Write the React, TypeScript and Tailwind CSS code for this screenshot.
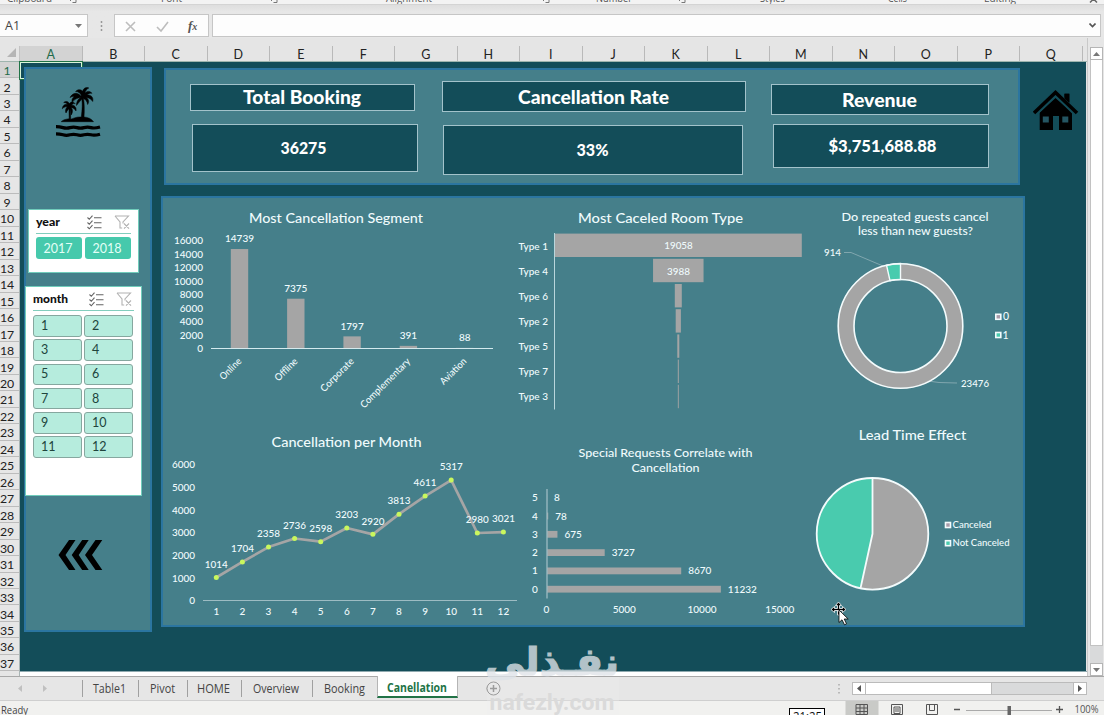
import React from 'react';

type TProps = {
  x: number;
  y: number;
  w?: number;
  size?: number;
  anchor?: 'start' | 'middle' | 'end';
  weight?: number;
  fill?: string;
  rotate?: number;
  children: React.ReactNode;
};

function T({ x, y, w, size = 10, anchor = 'middle', weight = 500, fill = '#f0fbfd', rotate, children }: TProps) {
  return (
    <text
      x={x}
      y={y}
      fontSize={size}
      fontWeight={weight}
      textAnchor={anchor}
      fill={fill}
      textLength={w}
      lengthAdjust="spacingAndGlyphs"
      transform={rotate ? `rotate(${rotate} ${x} ${y})` : undefined}
    >
      {children}
    </text>
  );
}

const GRAY = '#a5a5a5';
const MINT = '#49cbae';
const AXIS = '#b9d6dc';

function SegmentChart() {
  const data: [string, number, number][] = [
    ['Online', 14739, 26],
    ['Offline', 7375, 28],
    ['Corporate', 1797, 43],
    ['Complementary', 391, 66],
    ['Aviation', 88, 33],
  ];
  return (
    <svg width="345" height="222" viewBox="163 198 345 222" className="shrink-0 overflow-visible">
      <T x={336} y={223.3} w={174} size={13.5}>Most Cancellation Segment</T>
      {[0, 2000, 4000, 6000, 8000, 10000, 12000, 14000, 16000].map((v) => (
        <T key={v} x={203} y={352.2 - v * 0.00675} anchor="end">{v}</T>
      ))}
      {data.map(([name, v, w], i) => {
        const cx = 239.5 + i * 56.3;
        const top = 348.5 - v * 0.00675;
        return (
          <g key={name}>
            <rect x={cx - 8.7} y={top} width={17.4} height={348.5 - top} fill={GRAY} />
            <T x={cx} y={top - 6.7}>{v}</T>
            <T x={cx + 2.5} y={362} w={w} anchor="end" rotate={-45} size={9.8}>{name}</T>
          </g>
        );
      })}
      <path d="M211 348.5H493" stroke="#d4eaee" />
    </svg>
  );
}

function RoomChart() {
  const data: [string, number][] = [
    ['Type 1', 247], ['Type 4', 50.5], ['Type 6', 7], ['Type 2', 5.2], ['Type 5', 2], ['Type 7', 1], ['Type 3', 0.9],
  ];
  return (
    <svg width="302" height="222" viewBox="508 198 302 222" className="shrink-0 overflow-visible">
      <T x={660.5} y={223.3} w={165} size={13.5}>Most Caceled Room Type</T>
      {data.map(([name, w], i) => (
        <g key={name}>
          <rect x={678.3 - w / 2} y={233.6 + i * 25.2} width={w} height={23.4} fill={GRAY} />
          <T x={548} y={249.5 + i * 25.1} w={29.5} anchor="end">{name}</T>
        </g>
      ))}
      <T x={678.5} y={249.3} w={28.5}>19058</T>
      <T x={678.5} y={274.6} w={23}>3988</T>
      <path d="M554.5 233V409.500" stroke={AXIS} />
    </svg>
  );
}

function GuestsChart() {
  return (
    <svg width="213" height="222" viewBox="810 198 213 222" className="shrink-0 overflow-visible">
      <T x={915} y={220.500} w={147} size={12}>Do repeated guests cancel</T>
      <T x={915.5} y={235.3} w={115} size={12}>less than new guests?</T>
      <path d="M844 252.500L851 252.500L883 266M928 381L939 382.500L957 383" stroke="#8fb0b7" strokeWidth="0.8" fill="none" />
      <circle cx="900.5" cy="326" r="54.500" fill="none" stroke={GRAY} strokeWidth="16" />
      <path d="M886.5 265.100A62.500 62.500 0 0 1 900.500 263.500V279.500A46.500 46.500 0 0 0 890 280.700Z" fill={MINT} stroke="#f3fbfc" strokeWidth="1.4" />
      <circle cx="900.5" cy="326" r="62.300" fill="none" stroke="#f3fbfc" strokeWidth="1.6" />
      <circle cx="900.5" cy="326" r="46.500" fill="none" stroke="#f3fbfc" strokeWidth="1.6" />
      <T x={832.500} y={255.500} w={17}>914</T>
      <T x={975} y={386.500} w={28}>23476</T>
      <rect x="995.800" y="314.300" width="5" height="5" fill="#a99ba9" stroke="#f3fbfc" strokeWidth="1.6" />
      <T x={1003} y={320.300} anchor="start" size={10.500}>0</T>
      <rect x="995.800" y="332.500" width="5" height="5" fill={MINT} stroke="#f3fbfc" strokeWidth="1.6" />
      <T x={1002.500} y={338.500} anchor="start" size={10.500}>1</T>
    </svg>
  );
}

function MonthChart() {
  const values = [1014, 1704, 2358, 2736, 2598, 3203, 2920, 3813, 4611, 5317, 2980, 3021];
  const pts = values.map((v, i) => ({ v, x: 216.3 + i * 26.1, y: 600.5 - v * 0.02265 }));
  return (
    <svg width="357" height="205" viewBox="163 420 357 205" className="shrink-0 overflow-visible">
      <T x={346.500} y={447} w={150} size={13.500}>Cancellation per Month</T>
      {[0, 1000, 2000, 3000, 4000, 5000, 6000].map((v) => (
        <T key={v} x={195} y={604.300 - v * 0.02265} anchor="end" w={v ? 23 : undefined}>{v}</T>
      ))}
      <path d="M203 600.500H517" stroke="#9dbcc3" strokeWidth="1.2" />
      <polyline points={pts.map((p) => `${p.x},${p.y}`).join(' ')} fill="none" stroke={GRAY} strokeWidth="2.7" strokeLinejoin="round" />
      {pts.map((p, i) => (
        <g key={i}>
          <circle cx={p.x} cy={p.y} r="2.500" fill="#c9f75e" />
          <T x={p.x} y={p.y - 9.800} w={23}>{p.v}</T>
          <T x={p.x} y={615.200}>{i + 1}</T>
        </g>
      ))}
    </svg>
  );
}

function RequestsChart() {
  const values = [8, 78, 675, 3727, 8670, 11232];
  return (
    <svg width="290" height="205" viewBox="520 420 290 205" className="shrink-0 overflow-visible">
      <T x={665.500} y={456.800} w={174} size={12}>Special Requests Correlate with</T>
      <T x={665.500} y={471.500} w={68} size={12}>Cancellation</T>
      {values.map((v, i) => {
        const cy = 497.700 + i * 18.300;
        return (
          <g key={v}>
            <rect x={547} y={cy - 3.400} width={v * 0.01548} height={6.800} fill={GRAY} />
            <T x={535} y={cy + 3.500}>{5 - i}</T>
            <T x={554 + v * 0.01548} y={cy + 3.500} anchor="start">{v}</T>
          </g>
        );
      })}
      <path d="M547 489V598.500" stroke="#9dbcc3" strokeWidth="1.3" />
      {[0, 5000, 10000, 15000].map((v) => (
        <T key={v} x={546.500 + v * 0.01555} y={613}>{v}</T>
      ))}
    </svg>
  );
}

function LeadTimeChart() {
  return (
    <svg width="213" height="205" viewBox="810 420 213 205" className="shrink-0 overflow-visible">
      <T x={912.500} y={440} w={107.500} size={13.500}>Lead Time Effect</T>
      <circle cx="872.5" cy="533.8" r="55.800" fill={MINT} />
      <path d="M872.5 533.800V478A55.800 55.800 0 1 1 860.500 588.300Z" fill={GRAY} />
      <path d="M872.5 478V533.800L860.500 588.300" fill="none" stroke="#f3fbfc" strokeWidth="1.800" />
      <circle cx="872.5" cy="533.8" r="55.800" fill="none" stroke="#f3fbfc" strokeWidth="1.800" />
      <rect x="945.5" y="522.500" width="5" height="5" fill="#a99ba9" stroke="#f3fbfc" strokeWidth="1.600" />
      <T x={952.500} y={528.200} w={39} anchor="start" size={9.500}>Canceled</T>
      <rect x="945.5" y="540.700" width="5" height="5" fill={MINT} stroke="#f3fbfc" strokeWidth="1.600" />
      <T x={952.500} y={546.300} w={57} anchor="start" size={9.500}>Not Canceled</T>
    </svg>
  );
}

function PalmIcon() {
  return (
    <svg width="46" height="52" viewBox="55 86 46 52" className="ml-[29px] mt-[17px]" fill="#000">
      <path stroke="#000" strokeWidth="0.5" d="M80.800 96C78 92.500 73 92 70 97.500C71.500 96.500 73 96.500 74 96.700C71.800 98.600 71.600 100.600 72.300 102.300C74.500 98.800 78 98 80.600 97.600C77.800 99.200 76.400 102 76.500 105.500C78.500 102.600 80.800 100.700 81.800 99C82.500 103 82.300 109 81.300 117C76.500 116.600 73 118.500 70.700 119.200L70.300 109.500C71 111 70.800 113.200 71.200 115C73 112.500 72.800 109.500 71.300 107.800C73 107.600 75 109 76 111C76.800 107 74 105 71.500 105.300C72.300 103.800 74 103.300 75.200 103.700C73.200 101 70.400 101.800 69.500 103.600C67.800 100.800 65.200 101 63.700 102.500C65.500 102.500 67 103.200 67.600 104.500C65 103.800 62.500 105.500 62.300 108.800C64 106.800 66 106.500 67.300 106.800C65.500 108.500 65 111 66 113C67 111 68 109.500 69 108.700L69.200 118.700C65.500 119.200 62.500 120 61.200 121.700H93.500C91.500 118.500 87.500 117.300 84 117C84.600 110 84.300 103 83.500 98.500C85.800 99.400 87.200 101.700 87.600 104.500C89.500 101.800 88.600 99.200 86.400 97.500C89 97.700 91.400 99.200 92.700 101.500C93.700 97.300 91.200 94.800 87 95C88.600 93.400 90.500 92.900 92 93.300C90 90.600 86.900 91 84.900 93C85.500 90.400 86.900 89 88.800 88C86 86.700 83.200 88.500 82.700 91.200C80.400 89 77.300 89.400 75.600 91.500C78.500 91.500 80.500 93.200 81.300 95.500Z" />
      <path d="M56 126.600Q59.600 126.600 63 127.600T70 127.600T77 127.600T84 127.600T91 127.600T100 127M56 133.800Q59.600 133.800 63 134.800T70 134.800T77 134.800T84 134.800T91 134.800T100 134.200" fill="none" stroke="#000" strokeWidth="3.200" />
    </svg>
  );
}

function HomeIcon() {
  return (
    <svg width="46" height="42" viewBox="1033 90 46 42" className="mt-7 shrink-0">
      <path d="M1064.500 93.700h4.800v12l-4.800-5z" />
      <path d="M1055.500 98L1072 112.500V130H1059V116h-6v14h-13.300V112.500z" />
      <path d="M1034.500 113.500L1055.500 93L1076.500 113.500" fill="none" stroke="#134d59" strokeWidth="6" />
      <path d="M1064.500 93.700h4.800v9l-4.800-4z" />
      <path d="M1034 113L1055.500 92.500L1077 113" fill="none" stroke="#000" strokeWidth="3.600" />
      <path d="M1042.800 116.500h6v6h-6zM1062.300 116.500h6v6h-6z" fill="#245562" />
    </svg>
  );
}

function SlicerIcons({ line }: { line: string }) {
  return (
    <svg width="44" height="15" viewBox="0 0 44 15" fill="none" stroke="#646464" strokeWidth="1.1">
      <path d="M0.500 2.500l1.800 1.800L5.500 0.700M0.500 7.500l1.800 1.800L5.500 5.700M0.500 12l1.800 1.800L5.500 10.200M7 2.800h7.500M7 7.700h7.500M7 12.700h7.500" />
      <path d="M28 1h13.500l-5.500 6v1.500M28 1l5 6v6h2.200M37 8.500l5 5.200M42 8.500l-5 5.200" stroke={line} />
    </svg>
  );
}

function Kpi({ title, value, box, head, body, tw, vw, ty, dx, vy = 18 }: {
  title: string; value: string; box: string; head: string; body: string; tw: number; vw: number; ty: number; dx: number; vy?: number;
}) {
  return (
    <div className={`flex shrink-0 flex-col ${box}`}>
      <div className={`flex items-center justify-center border border-[#a3c3cb] bg-[#134d59] ${head}`}>
        <svg width={tw} height="24" className="overflow-visible">
          <T x={tw / 2 - 1} y={ty} w={tw} size={18} weight={900} fill="#fff">{title}</T>
        </svg>
      </div>
      <div className={`flex items-center justify-center border border-[#a3c3cb] bg-[#134d59] ${body}`}>
        <svg width={vw} height="24" className="overflow-visible">
          <T x={vw / 2 + dx} y={vy} w={vw} size={16.500} weight={900} fill="#fff">{value}</T>
        </svg>
      </div>
    </div>
  );
}

function UiText({ w, size = 12, bold, fill = '#444' , children }: { w: number; size?: number; bold?: boolean; fill?: string; children: string }) {
  return (
    <svg width={w} height="16" className="shrink-0 overflow-visible font-['Open_Sans',sans-serif]">
      <T x={0} y={12} w={w} size={size} anchor="start" fill={fill} weight={bold ? 700 : 400}>{children}</T>
    </svg>
  );
}

const columns = 'ABCDEFGHIJKLMNOPQ'.split('');
const rows = Array.from({ length: 37 }, (_, i) => i + 1);
const groups: [string, string, number, string][] = [
  ['Clipboard', 'ml-[7px]', 45, 'ml-[18px]'], ['Font', 'ml-[84px]', 21, 'ml-[89px]'], ['Alignment', 'ml-[108px]', 46, 'ml-[111px]'],
  ['Number', 'ml-[46px]', 36, 'ml-[47px]'], ['Styles', 'ml-[74px]', 25, ''], ['Cells', 'ml-[103px]', 19, ''], ['Editing', 'ml-[77px]', 32, ''],
];
const tabs: [string, string, number][] = [
  ['Table1', 'w-[56px]', 33], ['Pivot', 'w-[49px]', 25], ['HOME', 'w-[54px]', 33], ['Overview', 'w-[71px]', 46], ['Booking', 'w-[65px]', 41],
];

export default function App() {
  return (
    <div className="relative flex h-[715px] w-[1104px] flex-col overflow-hidden bg-[#e5e5e5] font-['Lato',sans-serif] text-[#333]">
      <div className="flex h-[5px] items-end overflow-hidden border-b border-[#d4d4d4] bg-[#f3f3f3]">
        {groups.map(([g, m, w, launcher]) => (
          <div key={g} className={`flex h-[14px] shrink-0 ${m}`}>
            <UiText w={w} size={10.500} fill="#555">{g}</UiText>
            {launcher && (
              <svg width="7" height="14" className={`shrink-0 ${launcher}`} fill="none" stroke="#777"><path d="M0.500 11v-4h4M6 9v3.500H2.500" /></svg>
            )}
          </div>
        ))}
        <div className="ml-auto mr-[6px] h-[14px]">
          <svg width="9" height="14" fill="none" stroke="#666" strokeWidth="1.500"><path d="M1 12.500l3.500-3.500l3.500 3.500" /></svg>
        </div>
      </div>
      <div className="flex h-[33px] items-start bg-gradient-to-b from-[#dedede] to-[#e7e7e7] to-20% pt-[9px]">
        <div className="flex h-[23px] w-[88px] shrink-0 items-center justify-between border border-l-0 border-[#c6c6c6] bg-[#fdfdfd] pl-[5px] pr-[5px]">
          <UiText w={15}>A1</UiText>
          <svg width="7" height="4"><path d="M0 0h7L3.500 4z" fill="#777" /></svg>
        </div>
        <svg width="26" height="12" className="mt-[6px] shrink-0"><path d="M13.500 1v2M13.500 5v2M13.500 9v2" stroke="#999" strokeWidth="1.500" /></svg>
        <div className="flex h-[23px] w-[95px] shrink-0 items-center border border-[#c6c6c6] bg-[#fdfdfd]">
          <svg width="93" height="20" fill="none" stroke="#bdbdbd" strokeWidth="1.600">
            <path d="M11 6l9 9M20 6l-9 9M42 11l4 4l7-9" />
            <text x="73" y="14" fontSize="13" fontStyle="italic" fontWeight="700" fill="#555" stroke="none" className="font-['Liberation_Serif',serif]">f<tspan fontSize="10">x</tspan></text>
          </svg>
        </div>
        <div className="ml-[3px] flex h-[23px] w-[889px] shrink-0 items-center justify-end border border-[#c6c6c6] bg-[#fdfdfd] pr-1">
          <svg width="7" height="5" fill="none" stroke="#555" strokeWidth="1.600"><path d="M0.500 0.500l3 3l3-3" /></svg>
        </div>
      </div>

      <div className="flex h-[633px]">
        <div className="flex h-[638px] w-[1087px] shrink-0 flex-col">
          <div className="flex h-6 items-end border-b border-[#9fb5ae] pt-2">
            <div className="flex h-full w-5 shrink-0 items-end justify-end border-r border-[#c4c4c4] pb-1 pr-[3px]">
              <svg width="9" height="9"><path d="M9 0v9H0z" fill="#b5b5b5" /></svg>
            </div>
            {columns.map((c) => (
              <div key={c} className={`flex h-full w-[62.500px] shrink-0 items-center justify-center border-r border-[#b9b9b9] pt-[3px] text-[12.500px] leading-none ${c === 'A' ? 'bg-[#d3d3d3] text-[#1f6b4a]' : 'text-[#222]'}`}>{c}</div>
            ))}
          </div>
          <div className="flex h-[609px]">
            <div className="flex w-5 shrink-0 flex-col border-r border-[#a9b5b5] bg-[#e6e6e6]">
              {rows.map((r) => (
                <div key={r} className={`flex h-[16.470px] shrink-0 items-center justify-center overflow-visible border-b border-[#bcbcbc] pr-[5px] pt-[3px] text-[12.300px] leading-none ${r === 1 ? 'bg-[#d3d3d3] text-[#1f6b4a]' : 'text-[#222]'}`}>{r}</div>
              ))}
            </div>
            <div className="relative flex w-[1066px] shrink-0 bg-[#134d59]">
              <div className="absolute left-0 top-0 h-[17px] w-[62px] border border-[#d9f5d9] outline outline-1 outline-[#217346]" />
              <aside className="relative ml-1 mt-[5px] flex h-[565px] w-[128px] shrink-0 flex-col items-start border-2 border-[#2b75a0] bg-[#457f8a]">
                <PalmIcon />
                <section className="ml-[2px] mt-[71px] flex h-[64px] w-[111px] shrink-0 flex-col border border-[#70ccbb] bg-white px-[7px]">
                  <div className="flex h-[24px] items-center justify-between border-b border-[#82cdbd] pt-px">
                    <svg width="24" height="16" className="overflow-visible"><T x={0} y={12} w={24} size={11.500} weight={900} anchor="start" fill="#111">year</T></svg>
                    <SlicerIcons line="#b2b2b2" />
                  </div>
                  <div className="mt-[3px] flex gap-[3px]">
                    {['2017', '2018'].map((y) => (
                      <div key={y} className="flex h-[22px] w-[46px] items-center justify-center rounded-[3px] bg-[#46c9ac] pt-[2px] pr-[2px] text-[12.500px] text-[#e3fff7]">{y}</div>
                    ))}
                  </div>
                </section>
                <section className="-ml-px mt-[13px] flex h-[210px] w-[117px] shrink-0 flex-col border border-[#70ccbb] bg-white px-[7px]">
                  <div className="flex h-[24px] items-center justify-between border-b border-[#82cdbd] pr-px pt-px">
                    <svg width="35" height="16" className="overflow-visible"><T x={0} y={12} w={35} size={11.500} weight={900} anchor="start" fill="#111">month</T></svg>
                    <SlicerIcons line="#b2b2b2" />
                  </div>
                  <div className="mt-[4px] grid grid-cols-[49px_49px] gap-x-[2px] gap-y-[2.800px]">
                    {rows.slice(0, 12).map((m) => (
                      <div key={m} className="flex h-[21.500px] items-center rounded-[3px] border border-[#86a79f] bg-[#b6ecdd] pl-[7px] pt-px text-[12.500px] text-[#20443c]">{m}</div>
                    ))}
                  </div>
                </section>
                <svg width="46" height="32" viewBox="0 0 46 32" className="ml-8 mt-[43px]">
                  <path d="M0.500 16L11 1h6.500L7.500 16L17.500 31H11zM13.700 16L24.200 1h6.500L20.700 16L30.700 31H24.200zM27 16L37.500 1h6.800L34 16L44.300 31H37.500z" />
                </svg>
              </aside>
              <div className="ml-[9px] mt-[6px] flex w-[864px] shrink-0 flex-col">
                <div className="ml-[3px] flex h-[117px] w-[856px] border-2 border-[#2b75a0] bg-[#457f8a]">
                  <Kpi title="Total Booking" value="36275" box="ml-6 mt-[14px]" head="h-[27px] w-[225px]" body="ml-[2px] mt-[13px] h-[48px] w-[226px]" tw={118} vw={46} ty={18} dx={-1.5} />
                  <Kpi title="Cancellation Rate" value="33%" box="ml-[24px] mt-[11px]" head="h-[31px] w-[304px]" body="ml-px mt-[13px] h-[50px] w-[300px]" tw={151} vw={32} ty={18.500} dx={-0.5} />
                  <Kpi title="Revenue" value="$3,751,688.88" box="ml-[25px] mt-[14px]" head="h-[31px] w-[218px]" body="ml-[2px] mt-[9px] h-[44px] w-[216px]" tw={75} vw={108} ty={19} dx={1.500} />
                </div>
                <div className="mt-[11px] flex h-[431px] w-[864px] flex-col border-2 border-[#2b75a0] bg-[#457f8a]">
                  <div className="flex"><SegmentChart /><RoomChart /><GuestsChart /></div>
                  <div className="flex"><MonthChart /><RequestsChart /><LeadTimeChart /></div>
                </div>
              </div>
              <div className="ml-[8px]"><HomeIcon /></div>
            </div>
          </div>
          <div className="flex h-[5px]">
            <div className="w-5 border-r border-[#a9b5b5] bg-[#e6e6e6]" />
            <div className="flex-1 border-t border-[#8fa9af] bg-white" />
          </div>
        </div>
        <div className="flex h-[638px] w-[17px] shrink-0 flex-col items-center border-l border-[#c9c9c9] bg-[#e6e6e6] pt-[9px]">
          <div className="flex h-[13px] w-[13px] items-center justify-center border border-[#b5b5b5] bg-white"><svg width="7" height="4"><path d="M0 4h7L3.500 0z" fill="#777" /></svg></div>
          <div className="h-[586px] w-[13px] border border-t-0 border-[#c2c2c2] bg-white" />
          <div className="h-[17px] w-[13px] bg-[#d9dadb]" />
          <div className="flex h-[13px] w-[13px] items-center justify-center border border-[#b5b5b5] bg-white"><svg width="7" height="4"><path d="M0 0h7L3.500 4z" fill="#777" /></svg></div>
        </div>
      </div>

      <div className="mt-[5px] flex h-[25px] shrink-0 items-start border-b border-t border-b-[#cfcfcf] border-t-[#a8a8a8] bg-[#e6e6e6]">
        <svg width="82" height="22" fill="#c0c0c0"><path d="M22 8v7l-4-3.500zM43 8v7l4-3.500z" /></svg>
        {tabs.map(([name, w, tw]) => (
          <div key={name} className={`mt-[3px] flex h-[17px] shrink-0 items-center justify-center border-l border-[#a0a0a0] pr-[2px] ${w}`}><UiText w={tw}>{name}</UiText></div>
        ))}
        <div className="-mt-px flex h-[22px] w-[81px] shrink-0 items-center justify-center border-x border-b-2 border-x-[#b5b5b5] border-b-[#217346] bg-white pr-px pt-[3px]"><UiText w={60} size={11.500} bold fill="#217346">Canellation</UiText></div>
        <svg width="394" height="24" fill="none" stroke="#777" className="shrink-0">
          <circle cx="35.500" cy="11.500" r="6.500" /><path d="M32 11.500h7M35.500 8v7" strokeWidth="1.500" />
          <path d="M381 7v1.500M381 11v1.500M381 15v1.500" strokeWidth="1.500" stroke="#aaa" />
        </svg>
        <div className="mt-[5px] flex h-[13px] w-[235px] shrink-0 border border-[#bbb] bg-[#d9dadb]">
          <div className="flex w-[13px] items-center justify-center border-r border-[#bbb] bg-white"><svg width="4" height="7"><path d="M4 0v7L0 3.500z" fill="#555" /></svg></div>
          <div className="w-[126px] border-r border-[#bbb] bg-white" />
          <div className="flex-1" />
          <div className="flex w-[13px] items-center justify-center border-l border-[#bbb] bg-white"><svg width="4" height="7"><path d="M0 0v7L4 3.500z" fill="#555" /></svg></div>
        </div>
      </div>

      <div className="flex h-[14px] shrink-0 overflow-hidden bg-[#f1f1ef]">
        <div className="ml-px mt-px w-[788px]"><UiText w={27} size={10.500}>Ready</UiText></div>
        <div className="mt-[7px] flex h-4 w-9 shrink-0 justify-center border border-black bg-white"><UiText w={29} size={12} fill="#111">21:25</UiText></div>
        <svg width="279" height="14" viewBox="825 701 279 14" fill="none" stroke="#555" className="shrink-0">
          <path d="M845.500 700h33v15h-33z" fill="#c9cac7" stroke="none" />
          <path d="M856 704.500h11.500v10H856zM856 708h11.500M856 711.500h11.500M860 704.500v10M864 704.500v10" />
          <path d="M891.500 704.500h11v10h-11zM894 707h6v6.500h-6zM895 709h4M895 711h4M926.500 704.500h11v10h-11zM929.500 704.500v6h5M934.500 704.500v6" />
          <path d="M954 709.500h6M1056 709.500h7M1059.500 706v7" strokeWidth="1.300" />
          <path d="M966 710.500h86" stroke="#aaa" />
          <path d="M1007.500 706h3.500v9h-3.500z" fill="#666" stroke="none" />
          <g className="font-['Open_Sans',sans-serif]" stroke="none"><T x={1074.500} y={713} w={24} size={10.500} weight={400} anchor="start" fill="#555">100%</T></g>
        </svg>
      </div>

      <div className="pointer-events-none absolute left-[484px] top-[640px]">
        <svg width="140" height="75" viewBox="484 640 140 75" className="font-['DejaVu_Sans',sans-serif]">
          <path d="M487 677h132v38H487z" fill="#eeeeee" opacity="0.3" />
          <text x="552" y="675" fontSize="38" fontWeight="700" textAnchor="middle" direction="rtl" textLength="134" lengthAdjust="spacingAndGlyphs" fill="#dfe4e8" stroke="#dfe4e8" strokeWidth="1.200" opacity="0.780">نفـذلى</text>
          <g className="font-['Roboto',sans-serif]"><T x={552} y={710} w={125} size={22} weight={700} fill="#dadada">nafezly.com</T></g>
        </svg>
      </div>
      <div className="pointer-events-none absolute left-[829px] top-[600px]">
        <svg width="22" height="26" viewBox="829 600 22 26" stroke="#fff" strokeWidth="0.800">
          <path d="M838.500 602l3 3.500h-2v3h3v-2l3.500 3l-3.500 3v-2h-8v2l-3.500-3l3.500-3v2h3v-3h-2zM837.500 611h2v4h-2z" fill="#000" />
          <path d="M839 610v12.500l3-2.700l2.500 5l2-1l-2.300-4.800h4z" fill="#fff" stroke="#000" />
        </svg>
      </div>
    </div>
  );
}
